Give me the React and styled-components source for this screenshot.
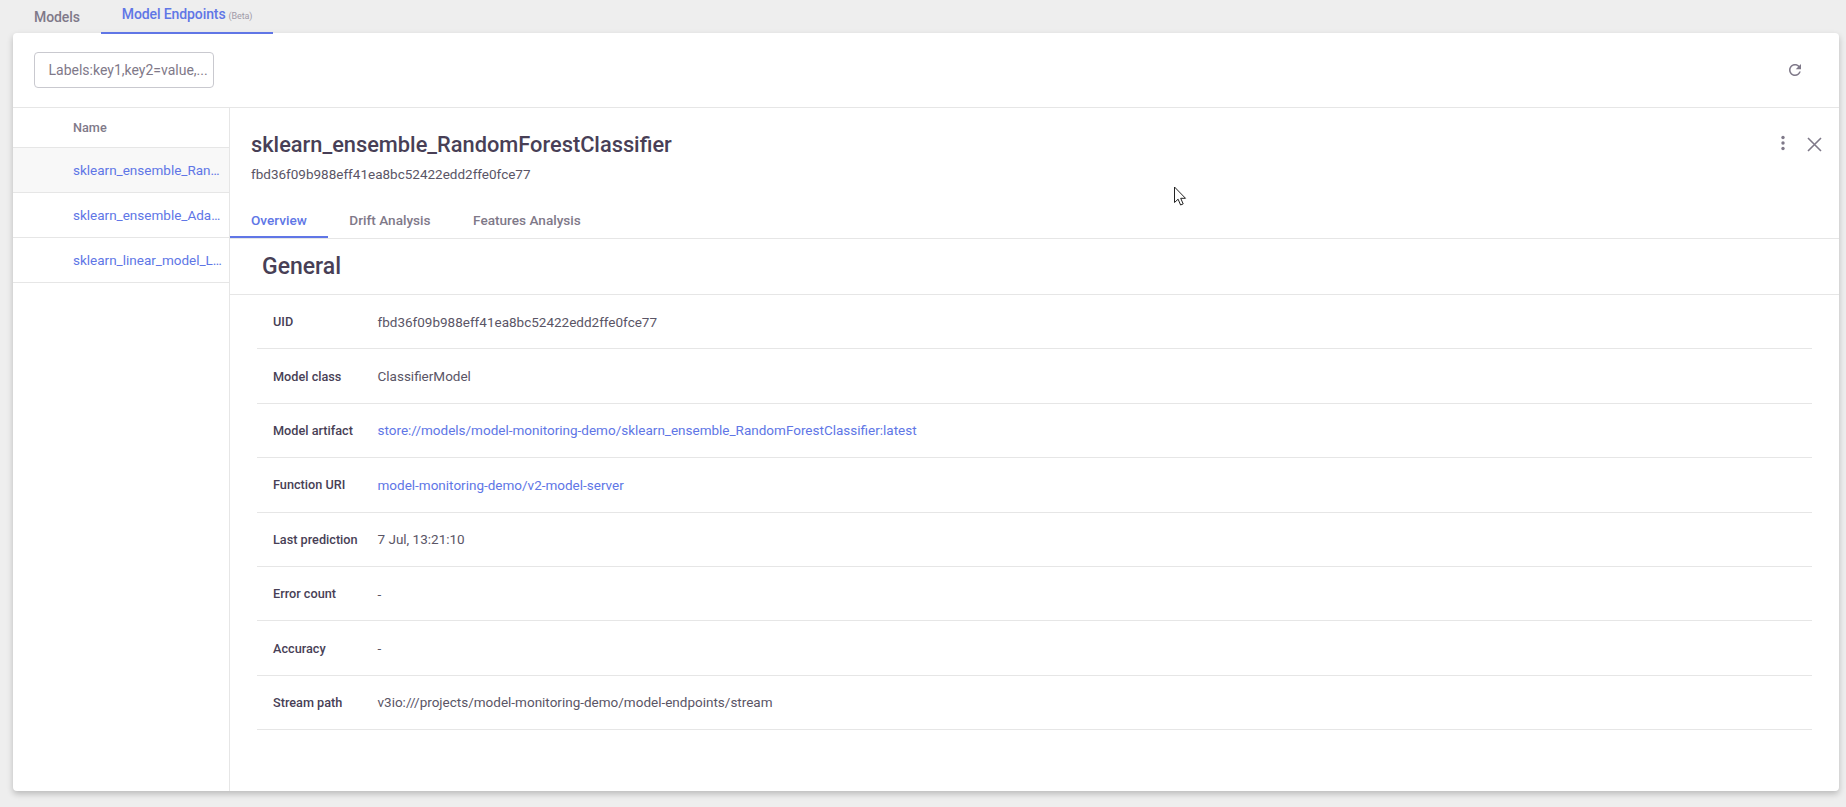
import styled, { createGlobalStyle } from "styled-components";

const GlobalStyle = createGlobalStyle`
  html, body {
    margin: 0;
    padding: 0;
    height: 100%;
    background: #eeeeee;
    font-family: Roboto, "Liberation Sans", sans-serif;
    color: #483f56;
  }
  * { box-sizing: border-box; }
`;

const Page = styled.div`
  position: relative;
  display: flex;
  flex-direction: column;
  height: 807px;
  padding: 0 7px 16px 13px;
  overflow: hidden;
`;

const TopTabs = styled.nav`
  display: flex;
  height: 33px;
  padding-left: 13px;
  flex: none;
`;

const TopTab = styled.div`
  display: flex;
  align-items: baseline;
  gap: 3px;
  height: ${(p) => (p.$active ? "34px" : "33px")};
  padding: ${(p) => (p.$active ? "6px 21px 0" : "9px 21px 0 8px")};
  font-size: 14px;
  font-weight: 500;
  letter-spacing: -0.1px;
  color: ${(p) => (p.$active ? "#6076e6" : "#7f7989")};
  border-bottom: ${(p) => (p.$active ? "2px solid #6076e6" : "none")};
  position: relative;
  z-index: 1;
`;

const Beta = styled.span`
  font-size: 9px;
  font-weight: 400;
  color: #a09aa8;
`;

const Card = styled.main`
  flex: 1;
  display: flex;
  flex-direction: column;
  min-height: 0;
  background: #fff;
  border-radius: 4px;
  box-shadow: 0 3px 6px rgba(0, 0, 0, 0.22);
`;

const Toolbar = styled.div`
  flex: none;
  display: flex;
  align-items: center;
  justify-content: space-between;
  height: 75px;
  padding: 0 35px 0 21px;
  border-bottom: 1px solid #e6e6e6;
`;

const LabelsInput = styled.div`
  width: 180px;
  height: 36px;
  padding-left: 13.5px;
  display: flex;
  align-items: center;
  border: 1px solid #c9c9cf;
  border-radius: 4px;
  font-size: 14px;
  color: #7f7989;
  white-space: nowrap;
`;

const IconButton = styled.button`
  display: flex;
  align-items: center;
  justify-content: center;
  padding: 0;
  border: 0;
  background: none;
  color: #7f7989;
  margin-top: ${(p) => p.$offset || 0}px;
`;

const Body = styled.div`
  flex: 1;
  display: flex;
  min-height: 0;
`;

const Sidebar = styled.aside`
  flex: none;
  width: 217px;
  border-right: 1px solid #e6e6e6;
`;

const SideHeader = styled.div`
  display: flex;
  align-items: center;
  height: 40px;
  padding-left: 60px;
  font-size: 12.7px;
  font-weight: 500;
  color: #7f7989;
  border-bottom: 1px solid #e6e6e6;
`;

const SideRow = styled.div`
  display: flex;
  align-items: center;
  height: 45px;
  padding: 0 6px 1px 60px;
  font-size: 13.5px;
  color: #6076e6;
  background: ${(p) => (p.$selected ? "#f8f8f8" : "#fff")};
  border-bottom: 1px solid #e6e6e6;
`;

const Truncate = styled.span`
  overflow: hidden;
  text-overflow: ellipsis;
  white-space: nowrap;
`;

const Detail = styled.section`
  flex: 1;
  min-width: 0;
  display: flex;
  flex-direction: column;
`;

const DetailHeader = styled.header`
  flex: none;
  height: 131px;
  display: flex;
  flex-direction: column;
  border-bottom: 1px solid #e6e6e6;
`;

const TitleRow = styled.div`
  display: flex;
  justify-content: space-between;
  padding: 23px 17px 0 21px;
`;

const Title = styled.h1`
  margin: 0;
  font-size: 21.8px;
  line-height: 28px;
  font-weight: 500;
  color: #483f56;
`;

const Uid = styled.div`
  margin-top: 7px;
  font-size: 13.5px;
  line-height: 16px;
  color: #5a5566;
`;

const HeaderActions = styled.div`
  display: flex;
  align-items: flex-start;
  gap: 22px;
  padding-top: 4px;
`;

const DetailTabs = styled.div`
  margin-top: auto;
  display: flex;
`;

const DetailTab = styled.div`
  height: 37px;
  padding: 11px 21.5px 0 21px;
  font-size: 13.6px;
  font-weight: 500;
  color: ${(p) => (p.$active ? "#6076e6" : "#7f7989")};
  border-bottom: ${(p) => (p.$active ? "2px solid #6076e6" : "none")};
`;

const SectionTitle = styled.h2`
  flex: none;
  margin: 0;
  height: 56px;
  display: flex;
  align-items: center;
  padding-left: 32px;
  padding-bottom: 1px;
  font-size: 23px;
  font-weight: 500;
  color: #483f56;
  border-bottom: 1px solid #e6e6e6;
`;

const InfoList = styled.div`
  padding: 0 27px 0 27px;
`;

const InfoRow = styled.div`
  display: flex;
  align-items: center;
  height: 54.4px;
  padding-left: 16px;
  font-size: 13.5px;
  border-bottom: 1px solid #e6e6e6;
`;

const InfoLabel = styled.div`
  flex: none;
  width: 104.5px;
  font-size: 12.7px;
  font-weight: 500;
  color: #483f56;
`;

const InfoValue = styled.div`
  color: ${(p) => (p.$link ? "#6076e6" : "#5a5566")};
`;

const Cursor = styled.svg`
  position: absolute;
  left: 1173px;
  top: 186px;
`;

const models = [
  { name: "sklearn_ensemble_RandomForestClassifier", selected: true },
  { name: "sklearn_ensemble_AdaBoostClassifier" },
  { name: "sklearn_linear_model_LogisticRegression" },
];

const info = [
  { label: "UID", value: "fbd36f09b988eff41ea8bc52422edd2ffe0fce77" },
  { label: "Model class", value: "ClassifierModel" },
  {
    label: "Model artifact",
    value: "store://models/model-monitoring-demo/sklearn_ensemble_RandomForestClassifier:latest",
    link: true,
  },
  { label: "Function URI", value: "model-monitoring-demo/v2-model-server", link: true },
  { label: "Last prediction", value: "7 Jul, 13:21:10" },
  { label: "Error count", value: "-" },
  { label: "Accuracy", value: "-" },
  { label: "Stream path", value: "v3io:///projects/model-monitoring-demo/model-endpoints/stream" },
];

const RefreshIcon = () => (
  <svg width="18" height="18" viewBox="0 0 24 24" fill="currentColor">
    <path d="M17.65 6.35C16.2 4.9 14.21 4 12 4c-4.42 0-7.99 3.58-7.99 8s3.57 8 7.99 8c3.73 0 6.84-2.55 7.73-6h-2.08c-.82 2.33-3.04 4-5.65 4-3.31 0-6-2.69-6-6s2.69-6 6-6c1.66 0 3.14.69 4.22 1.78L13 11h7V4l-2.35 2.35z" />
  </svg>
);

const KebabIcon = () => (
  <svg width="4" height="16" viewBox="0 0 4 16" fill="currentColor">
    <circle cx="2" cy="2.5" r="1.7" />
    <circle cx="2" cy="8" r="1.7" />
    <circle cx="2" cy="13.5" r="1.7" />
  </svg>
);

const CloseIcon = () => (
  <svg width="15" height="15" viewBox="0 0 15 15" stroke="currentColor" strokeWidth="1.6" fill="none">
    <path d="M1 1l13 13M14 1L1 14" />
  </svg>
);

const App = () => {
  return (
    <>
      <GlobalStyle />
      <Page>
        <TopTabs>
          <TopTab>Models</TopTab>
          <TopTab $active>
            Model Endpoints <Beta>(Beta)</Beta>
          </TopTab>
        </TopTabs>
        <Card>
          <Toolbar>
            <LabelsInput>Labels:key1,key2=value,...</LabelsInput>
            <IconButton>
              <RefreshIcon />
            </IconButton>
          </Toolbar>
          <Body>
            <Sidebar>
              <SideHeader>Name</SideHeader>
              {models.map((m) => (
                <SideRow key={m.name} $selected={m.selected}>
                  <Truncate>{m.name}</Truncate>
                </SideRow>
              ))}
            </Sidebar>
            <Detail>
              <DetailHeader>
                <TitleRow>
                  <div>
                    <Title>sklearn_ensemble_RandomForestClassifier</Title>
                    <Uid>fbd36f09b988eff41ea8bc52422edd2ffe0fce77</Uid>
                  </div>
                  <HeaderActions>
                    <IconButton>
                      <KebabIcon />
                    </IconButton>
                    <IconButton $offset={2}>
                      <CloseIcon />
                    </IconButton>
                  </HeaderActions>
                </TitleRow>
                <DetailTabs>
                  <DetailTab $active>Overview</DetailTab>
                  <DetailTab>Drift Analysis</DetailTab>
                  <DetailTab>Features Analysis</DetailTab>
                </DetailTabs>
              </DetailHeader>
              <SectionTitle>General</SectionTitle>
              <InfoList>
                {info.map((row) => (
                  <InfoRow key={row.label}>
                    <InfoLabel>{row.label}</InfoLabel>
                    <InfoValue $link={row.link}>{row.value}</InfoValue>
                  </InfoRow>
                ))}
              </InfoList>
            </Detail>
          </Body>
        </Card>
        <Cursor width="14" height="22" viewBox="0 0 14 22">
          <path
            d="M1.5 1v15.5l3.6-3.3 2.5 5.8 2.6-1.1-2.5-5.6h4.8z"
            fill="#fff"
            stroke="#222"
            strokeWidth="1"
          />
        </Cursor>
      </Page>
    </>
  );
};

export default App;
